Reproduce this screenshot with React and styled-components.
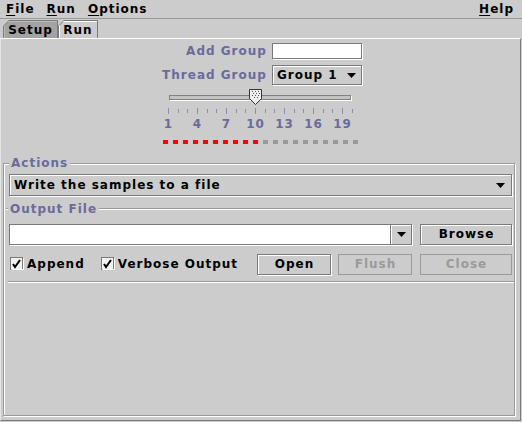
import React from 'react';
import styled, { createGlobalStyle } from 'styled-components';

const GlobalStyle = createGlobalStyle`
  html, body {
    margin: 0;
    padding: 0;
    background: #cccccc;
  }
`;

const LABEL = '#6a6a9c';
const DARK = '#7a7a7a';

const Window = styled.div`
  width: 522px;
  height: 422px;
  background: #cccccc;
  display: flex;
  flex-direction: column;
  font: bold 12px "DejaVu Sans", "Liberation Sans", sans-serif;
  letter-spacing: 1px;
  color: #000;
  overflow: hidden;
`;

const MenuBar = styled.div`
  height: 19px;
  box-sizing: border-box;
  border-bottom: 1px solid #999;
  display: flex;
  align-items: center;
  padding: 0 2px 1px 0;
`;

const MenuItem = styled.span`
  padding: 0 6px;
  line-height: 16px;
  margin-left: ${p => (p.$right ? 'auto' : '0')};
  u {
    text-decoration: underline;
    text-underline-offset: 2px;
  }
`;

const TabRow = styled.div`
  height: 19px;
  display: flex;
  align-items: flex-end;
  padding-left: 3px;
`;

const TabEdge = styled.div`
  width: ${p => p.$w}px;
  height: 18px;
  box-sizing: border-box;
  padding: 1px 1px 0 1px;
  background: ${DARK};
  clip-path: polygon(6px 0, 100% 0, 100% 100%, 0 100%, 0 6px);
`;

const TabFace = styled.div`
  height: 100%;
  display: flex;
  align-items: center;
  justify-content: center;
  background: ${p => (p.$selected ? '#cccccc' : '#a3a3a3')};
  box-shadow: inset 1px 1px 0 ${p => (p.$selected ? '#ffffff' : '#bcbcbc')};
  clip-path: polygon(5px 0, 100% 0, 100% 100%, 0 100%, 0 5px);
`;

const Content = styled.div`
  flex: 1;
  min-height: 0;
  margin: 0 1px 1px 0;
  border-top: 1px solid #ffffff;
  border-left: 1px solid #e4e4e4;
  border-right: 1px solid ${DARK};
  border-bottom: 1px solid ${DARK};
  padding: 4px 5px 4px 2px;
  display: flex;
  flex-direction: column;
`;

const TopSection = styled.div`
  display: flex;
  flex-direction: column;
  align-items: center;
  padding-left: 2px;
`;

const FormGrid = styled.div`
  display: grid;
  grid-template-columns: auto 90px;
  grid-template-rows: 16px 20px;
  column-gap: 5px;
  row-gap: 6px;
  align-items: center;
  margin-left: 4px;
`;

const FieldLabel = styled.span`
  color: ${LABEL};
  justify-self: end;
  line-height: 14px;
`;

const TextField = styled.div`
  box-sizing: border-box;
  height: 16px;
  background: #ffffff;
  border: 1px solid ${DARK};
  box-shadow: 1px 1px 0 #ffffff;
`;

const Combo = styled.div`
  box-sizing: border-box;
  height: ${p => p.$h}px;
  display: flex;
  align-items: center;
  justify-content: space-between;
  padding: 0 ${p => p.$pr}px 0 4px;
  border: 1px solid ${DARK};
  box-shadow: inset 1px 1px 0 #ffffff, 1px 1px 0 #ffffff;
`;

const SliderBox = styled.div`
  width: 220px;
  margin-top: 4px;
  display: flex;
  flex-direction: column;
`;

const TrackArea = styled.div`
  position: relative;
  height: 16px;
  display: flex;
  align-items: center;
`;

const Track = styled.div`
  box-sizing: border-box;
  margin-left: 19px;
  width: 182px;
  height: 5px;
  background: #c2c2c2;
  border: 1px solid #808080;
  box-shadow: 1px 1px 0 #ffffff;
`;

const Thumb = styled.svg`
  position: absolute;
  top: 0;
`;

const Ticks = styled.svg`
  display: block;
  margin-top: 3px;
`;

const TickLabels = styled.div`
  display: flex;
  margin-top: 3px;
  padding-left: 3.5px;
`;

const TickLabel = styled.span`
  width: 29px;
  text-align: center;
  color: ${LABEL};
  line-height: 14px;
  text-indent: 1px;
`;

const Dots = styled.div`
  display: flex;
  gap: 5px;
  margin-top: 9px;
`;

const Dot = styled.span`
  width: 5px;
  height: 4px;
  background: ${p => (p.$on ? '#ff0000' : '#999999')};
`;

const Group = styled.div`
  position: relative;
  flex: 1;
  margin-top: 19px;
  border: 1px solid #999999;
  box-shadow: inset 1px 1px 0 #ffffff, 1px 1px 0 #ffffff;
  padding: 10px 2px 0 5px;
  display: flex;
  flex-direction: column;
`;

const GroupTitle = styled.span`
  position: absolute;
  top: -8px;
  left: 5px;
  padding: 0 2px;
  background: #cccccc;
  color: ${LABEL};
  line-height: 14px;
`;

const SubHeader = styled.div`
  display: flex;
  align-items: center;
  margin-top: 6px;
  height: 13px;
  color: ${LABEL};
  &::before,
  &::after {
    content: '';
    height: 0;
    border-top: 1px solid #999999;
    border-bottom: 1px solid #ffffff;
  }
  &::before {
    width: 2px;
    margin-left: -3px;
  }
  &::after {
    flex: 1;
  }
  span {
    padding: 0 2px;
  }
`;

const Row = styled.div`
  display: flex;
  align-items: center;
  margin-top: ${p => p.$mt}px;
  height: 22px;
`;

const EditCombo = styled.div`
  flex: 1;
  display: flex;
  height: 21px;
  box-sizing: border-box;
  border: 1px solid ${DARK};
  box-shadow: 1px 1px 0 #ffffff;
`;

const EditArea = styled.div`
  flex: 1;
  background: #ffffff;
`;

const ArrowButton = styled.div`
  width: 20px;
  display: flex;
  align-items: center;
  justify-content: center;
  border-left: 1px solid ${DARK};
  box-shadow: inset 1px 1px 0 #ffffff;
`;

const Button = styled.div`
  box-sizing: border-box;
  width: ${p => p.$w}px;
  height: 21px;
  margin-left: ${p => (p.$ml === 'auto' ? 'auto' : `${p.$ml || 0}px`)};
  display: flex;
  align-items: center;
  justify-content: center;
  border: 1px solid ${p => (p.$disabled ? '#9a9a9a' : DARK)};
  box-shadow: ${p => (p.$disabled ? 'none' : 'inset 1px 1px 0 #ffffff, 1px 1px 0 #ffffff')};
  color: ${p => (p.$disabled ? '#9a9a9a' : '#000000')};
  text-indent: 1px;
`;

const Check = styled.label`
  display: flex;
  align-items: center;
  gap: 3px;
  margin-left: ${p => p.$ml}px;
`;

const CheckBox = styled.svg`
  display: block;
`;

const Separator = styled.div`
  margin: 6px -2px 0 -1px;
  height: 0;
  border-top: 1px solid #999999;
  border-bottom: 1px solid #ffffff;
`;

const Arrow = () => (
  <svg width="9" height="5" viewBox="0 0 9 5">
    <polygon points="0,0 9,0 4.5,5" fill="#000" />
  </svg>
);

const CheckIcon = () => (
  <CheckBox width="14" height="14" viewBox="0 0 14 14">
    <rect x="0.5" y="0.5" width="12" height="12" fill="#f2f2f2" stroke={DARK} />
    <path d="M1.5 12.5 H13.5 V1.5" fill="none" stroke="#fff" />
    <path d="M3 7 L5 10 L10 3" fill="none" stroke="#000" strokeWidth="2" />
  </CheckBox>
);

const STEP = 9.667;
const VALUE = 10;

function Slider() {
  const ticks = [];
  for (let i = 0; i < 20; i++) {
    const x = Math.round(18 + i * STEP) + 0.5;
    const major = i % 3 === 0;
    ticks.push(<line key={i} x1={x} x2={x} y1={major ? 0 : 1} y2={major ? 6 : 5} stroke="#8c8cae" />);
  }
  const dots = [];
  for (let i = 0; i < 20; i++) dots.push(<Dot key={i} $on={i < VALUE} />);
  const thumbX = Math.round(18 + (VALUE - 1) * STEP) - 6;
  return (
    <>
      <SliderBox>
        <TrackArea>
          <Track />
          <Thumb width="13" height="16" viewBox="0 0 13 16" style={{ left: thumbX }}>
            <path d="M0.5 0.5 H12.5 V9.5 L6.5 15.5 L0.5 9.5 Z" fill="#eeeeee" stroke="#333" />
            {[[3, 2], [6, 2], [9, 2], [4, 4], [7, 4], [10, 4], [3, 6], [6, 6], [9, 6], [5, 8], [8, 8]].map(([x, y], i) => (
              <rect key={i} x={x} y={y} width="1" height="1" fill="#555" />
            ))}
          </Thumb>
        </TrackArea>
        <Ticks width="220" height="6">{ticks}</Ticks>
        <TickLabels>
          {[1, 4, 7, 10, 13, 16, 19].map(n => (
            <TickLabel key={n}>{n}</TickLabel>
          ))}
        </TickLabels>
      </SliderBox>
      <Dots>{dots}</Dots>
    </>
  );
}

export default function App() {
  return (
    <Window>
      <GlobalStyle />
      <MenuBar>
        <MenuItem><u>F</u>ile</MenuItem>
        <MenuItem><u>R</u>un</MenuItem>
        <MenuItem><u>O</u>ptions</MenuItem>
        <MenuItem $right><u>H</u>elp</MenuItem>
      </MenuBar>
      <TabRow>
        <TabEdge $w={55}><TabFace>Setup</TabFace></TabEdge>
        <TabEdge $w={40}><TabFace $selected>Run</TabFace></TabEdge>
      </TabRow>
      <Content>
        <TopSection>
          <FormGrid>
            <FieldLabel>Add Group</FieldLabel>
            <TextField />
            <FieldLabel>Thread Group</FieldLabel>
            <Combo $h={20} $pr={5}>
              <span>Group 1</span>
              <Arrow />
            </Combo>
          </FormGrid>
          <Slider />
        </TopSection>
        <Group>
          <GroupTitle>Actions</GroupTitle>
          <Combo $h={22} $pr={6}>
            <span>Write the samples to a file</span>
            <Arrow />
          </Combo>
          <SubHeader><span>Output File</span></SubHeader>
          <Row $mt={8}>
            <EditCombo>
              <EditArea />
              <ArrowButton><Arrow /></ArrowButton>
            </EditCombo>
            <Button $w={92} $ml={8}>Browse</Button>
          </Row>
          <Row $mt={8}>
            <Check $ml={1}><CheckIcon />Append</Check>
            <Check $ml={16}><CheckIcon />Verbose Output</Check>
            <Button $w={74} $ml="auto">Open</Button>
            <Button $w={74} $ml={7} $disabled>Flush</Button>
            <Button $w={92} $ml={8} $disabled>Close</Button>
          </Row>
          <Separator />
        </Group>
      </Content>
    </Window>
  );
}
